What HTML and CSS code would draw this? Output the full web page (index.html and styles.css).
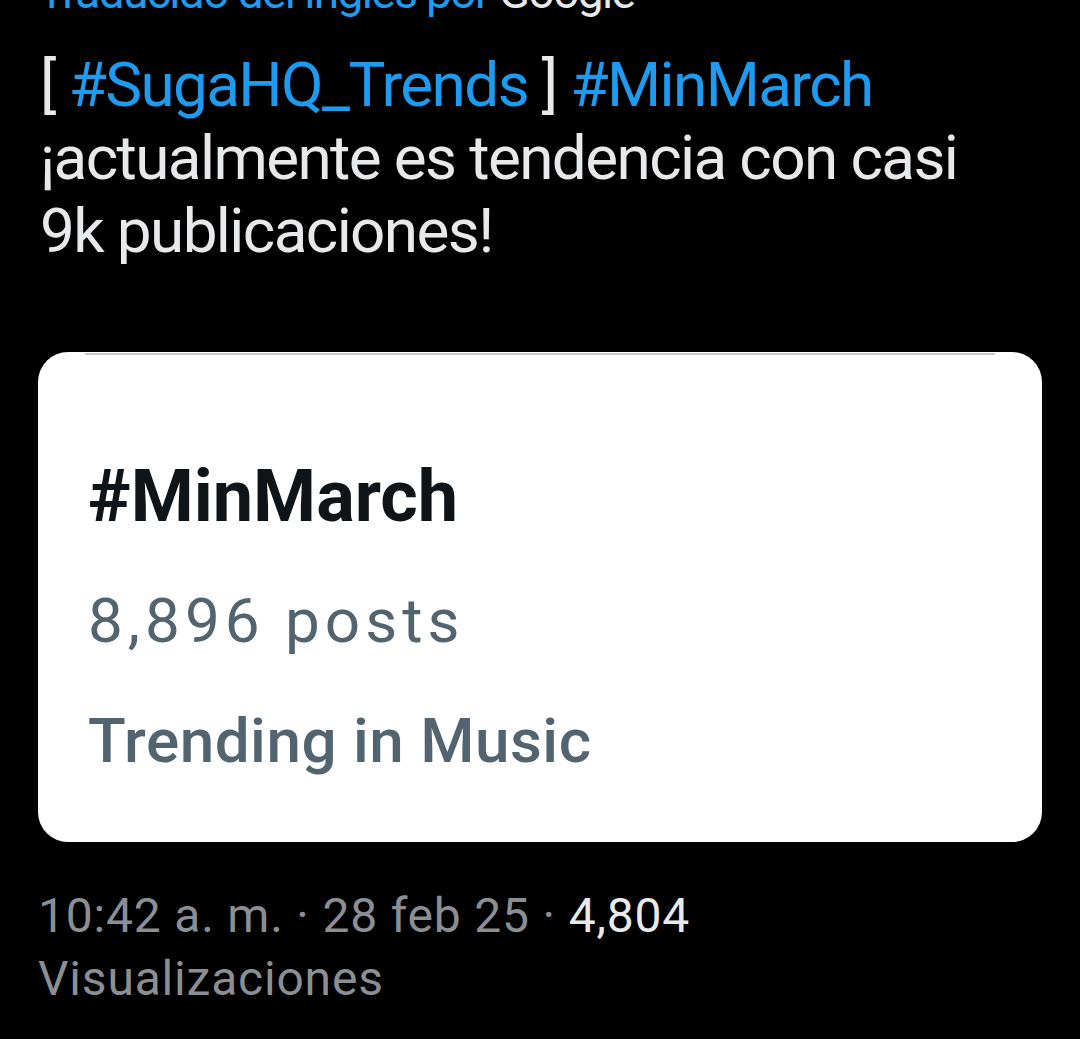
FILE: index.html
```html
<!DOCTYPE html>
<html lang="es">
<head>
    <meta charset="UTF-8">
    <meta name="viewport" content="width=device-width, initial-scale=1.0">
    <title>Publicación</title>
    <link rel="stylesheet" href="styles.css">
</head>
<body>
    <div class="tweet">
        <div class="translated">Traducido del inglés por <span class="google">Google</span></div>

        <div class="text">
            [ <span class="tag">#SugaHQ_Trends</span> ] <span class="tag">#MinMarch</span><br>
            ¡actualmente es tendencia con casi 9k publicaciones!
        </div>

        <div class="card">
            <div class="card-edge"></div>
            <div class="trend-name">#MinMarch</div>
            <div class="trend-count">8,896 posts</div>
            <div class="trend-topic">Trending in Music</div>
        </div>

        <div class="meta">
            10:42 a. m. · 28 feb 25 · <span class="views">4,804</span> Visualizaciones
        </div>
    </div>
</body>
</html>
```

FILE: styles.css
```css
body {
    margin: 0;
    background-color: #000;
    font-family: Roboto, "Noto Sans", Arial, sans-serif;
    overflow: hidden;
}
.tweet {
    padding: 0 40px 0 38px;
    width: 1004px;
}
.translated {
    font-size: 46px;
    line-height: 60px;
    margin-top: -38px;
    color: #1d9bf0;
    letter-spacing: -1.6px;
    white-space: nowrap;
}
.google {
    color: #e7e9ea;
}
.text {
    margin-top: 26px;
    font-size: 62px;
    line-height: 73px;
    letter-spacing: -1.6px;
    color: #e7e9ea;
    padding-left: 2px;
    padding-right: 20px;
}
.tag {
    color: #1d9bf0;
}
.card {
    margin-top: 85px;
    background: #fff;
    border-radius: 30px;
    padding: 1px 50px 64px 50px;
}
.card-edge {
    height: 2px;
    margin: 0 -3px;
    background: #c9c9c9;
}
.trend-name {
    margin-top: 99px;
    font-size: 72px;
    line-height: 86px;
    font-weight: bold;
    color: #0f1419;
}
.trend-count {
    margin-top: 44px;
    font-size: 62px;
    line-height: 74px;
    letter-spacing: 5px;
    color: #536471;
}
.trend-topic {
    margin-top: 46px;
    font-size: 62px;
    line-height: 74px;
    letter-spacing: 0.5px;
    font-weight: 500;
    color: #536471;
}
.meta {
    margin-top: 42px;
    font-size: 48px;
    line-height: 63px;
    letter-spacing: 0.8px;
    color: #8b8f94;
    padding-right: 260px;
}
.views {
    color: #e7e9ea;
}
```
